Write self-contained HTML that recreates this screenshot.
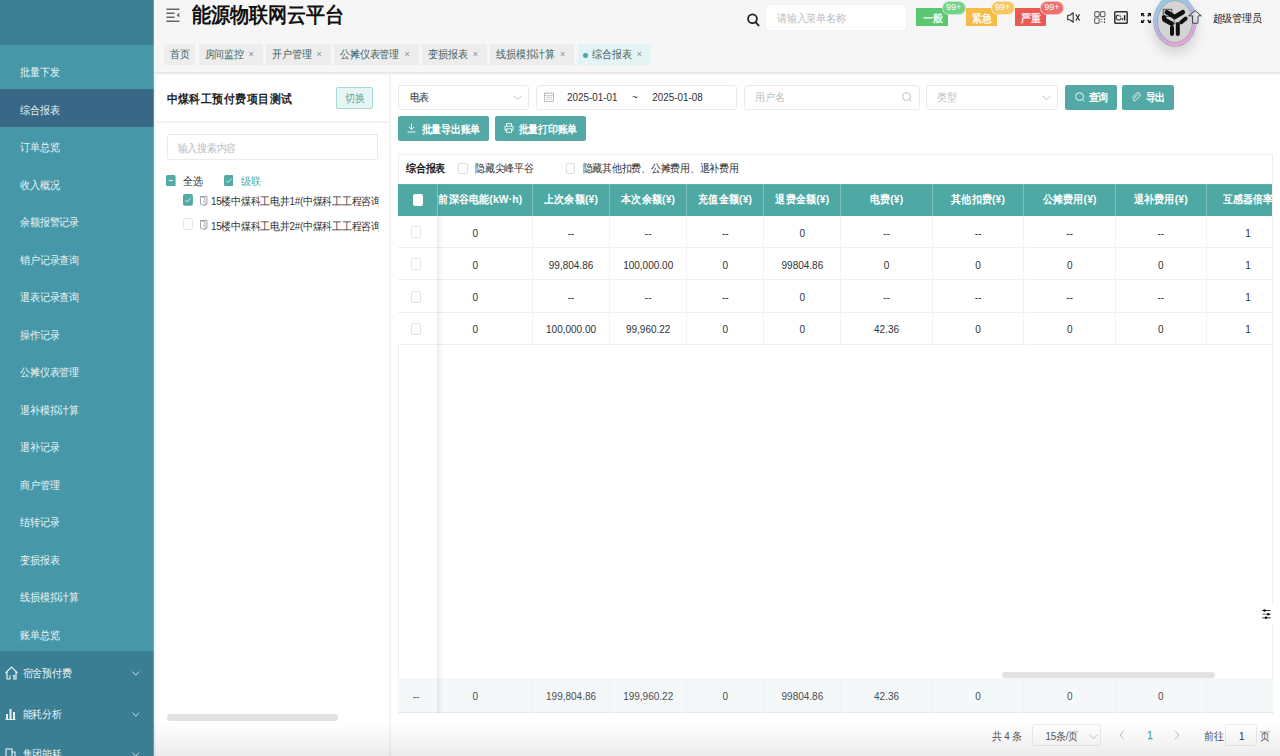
<!DOCTYPE html>
<html><head><meta charset="utf-8">
<style>
*{margin:0;padding:0;box-sizing:border-box}
html,body{width:1280px;height:756px;overflow:hidden;background:#f3f3f3;font-family:"Liberation Sans",sans-serif;color:#303133}
.a{position:absolute;white-space:nowrap}
#side{position:absolute;left:0;top:0;width:153.5px;height:756px;background:#4698a9;overflow:hidden}
.it{position:absolute;left:0;width:153.5px;height:37.5px;color:#eaf2f3;font-size:9.75px;letter-spacing:-0.25px}
.it>span{position:absolute;left:20.3px;line-height:37.5px;top:1.6px}
.act{background:#386886}
.tab{position:absolute;top:43.5px;height:21px;background:#ededed;color:#416363;font-size:9.75px;letter-spacing:-0.25px;line-height:21px;white-space:nowrap}
.tab>span{position:absolute;left:6px;top:-0.5px}
.tab>i{position:absolute;font-style:normal;color:#7f8e8e;font-size:9px;top:0}
.panel{position:absolute;background:#fff}
.inp{position:absolute;background:#fff;border:1px solid #ebebed;border-radius:2.5px}
.btn{position:absolute;background:#52a9a6;color:#fff;border-radius:2px;font-size:9.75px;letter-spacing:-0.25px}
.ph{color:#b9bcc2}
.hc{position:absolute;top:183.7px;height:32.2px;color:#fff;font-size:10.25px;letter-spacing:0.2px;font-weight:bold;text-align:center;line-height:32.2px;border-right:1px solid #7fc0bd;white-space:nowrap;overflow:hidden}
.c{position:absolute;height:32.25px;font-size:10px;text-align:center;line-height:34.25px;border-bottom:1px solid #eeeff1;border-right:1px solid #f2f2f4;color:#303133;white-space:nowrap}
.cb{position:absolute;width:9.5px;height:11.5px;border:1px solid #dcdfe6;border-radius:2px;background:#fff}
.t{display:inline-block;transform:scaleY(1.1);position:relative;top:0.8px}
</style></head><body>

<div id="side">
<div class="a" style="left:0;top:0;width:153.5px;height:45px;background:#3a7f94"></div>
<div class="it" style="top:51.90px"><span><span class="t">批量下发</span></span></div>
<div class="it act" style="top:89.40px"><span><span class="t">综合报表</span></span></div>
<div class="it" style="top:126.90px"><span><span class="t">订单总览</span></span></div>
<div class="it" style="top:164.40px"><span><span class="t">收入概况</span></span></div>
<div class="it" style="top:201.90px"><span><span class="t">余额报警记录</span></span></div>
<div class="it" style="top:239.40px"><span><span class="t">销户记录查询</span></span></div>
<div class="it" style="top:276.90px"><span><span class="t">退表记录查询</span></span></div>
<div class="it" style="top:314.40px"><span><span class="t">操作记录</span></span></div>
<div class="it" style="top:351.90px"><span><span class="t">公摊仪表管理</span></span></div>
<div class="it" style="top:389.40px"><span><span class="t">退补模拟计算</span></span></div>
<div class="it" style="top:426.90px"><span><span class="t">退补记录</span></span></div>
<div class="it" style="top:464.40px"><span><span class="t">商户管理</span></span></div>
<div class="it" style="top:501.90px"><span><span class="t">结转记录</span></span></div>
<div class="it" style="top:539.40px"><span><span class="t">变损报表</span></span></div>
<div class="it" style="top:576.90px"><span><span class="t">线损模拟计算</span></span></div>
<div class="it" style="top:614.40px"><span><span class="t">账单总览</span></span></div>
<div class="a" style="left:0;top:651px;width:153.5px;height:105px;background:#397e93"></div>
<div class="a" style="left:22.7px;top:663.3px;height:20px;line-height:20px;font-size:9.75px;letter-spacing:-0.25px;color:#eaf2f3"><span class="t">宿舍预付费</span></div>
<svg class="a" style="left:132px;top:670.9px" width="7.5" height="5" viewBox="0 0 7.5 5"><path d="M0.5 0.6 L3.75 4.2 L7 0.6" fill="none" stroke="#c6dde3" stroke-width="1"/></svg>
<div class="a" style="left:22.7px;top:704.0px;height:20px;line-height:20px;font-size:9.75px;letter-spacing:-0.25px;color:#eaf2f3"><span class="t">能耗分析</span></div>
<svg class="a" style="left:132px;top:711.6px" width="7.5" height="5" viewBox="0 0 7.5 5"><path d="M0.5 0.6 L3.75 4.2 L7 0.6" fill="none" stroke="#c6dde3" stroke-width="1"/></svg>
<div class="a" style="left:22.7px;top:744.5px;height:20px;line-height:20px;font-size:9.75px;letter-spacing:-0.25px;color:#eaf2f3"><span class="t">集团能耗</span></div>
<svg class="a" style="left:132px;top:752.1px" width="7.5" height="5" viewBox="0 0 7.5 5"><path d="M0.5 0.6 L3.75 4.2 L7 0.6" fill="none" stroke="#c6dde3" stroke-width="1"/></svg>
<svg class="a" style="left:4px;top:666px" width="15" height="14" viewBox="0 0 15 14"><path d="M1.5 7 L7.5 1 L13.5 7 M3 6 V13 H6 V9.5 M12 6 V13 H9" fill="none" stroke="#e8f0f2" stroke-width="1.2"/><path d="M9 9 L10 11 L11 9 M10 11 V13" fill="none" stroke="#e8f0f2" stroke-width="1"/></svg>
<svg class="a" style="left:5px;top:707px" width="11" height="13" viewBox="0 0 11 13"><path d="M0.5 12.5 H10.5" stroke="#e8f0f2" stroke-width="1"/><rect x="1" y="7" width="2" height="5" fill="#e8f0f2"/><rect x="4.5" y="2" width="2" height="10" fill="#e8f0f2"/><rect x="8" y="5" width="2" height="7" fill="#e8f0f2"/></svg>
<svg class="a" style="left:5px;top:748px" width="11" height="10" viewBox="0 0 11 10"><rect x="1" y="1" width="6" height="9" fill="none" stroke="#e8f0f2" stroke-width="1.1"/><path d="M7 4 H10 V10" fill="none" stroke="#e8f0f2" stroke-width="1.1"/></svg>
<div class="a" style="left:152.5px;top:0;width:1px;height:756px;background:rgba(255,255,255,0.22)"></div>
</div>
<div class="a" style="left:153.5px;top:0;width:1126.5px;height:73px;background:#f6f6f6;border-bottom:1px solid #e4e4e4"></div>
<svg class="a" style="left:166px;top:8px" width="14" height="14" viewBox="0 0 14 14"><path d="M0.4 1.2 H13.4 M0.4 5.3 H8.6 M0.4 9.2 H8.6 M0.4 13.3 H13.4" stroke="#666" stroke-width="1.6"/><path d="M13.3 4.6 L10.6 7.2 L13.3 9.6 Z" fill="#666"/></svg>
<div class="a" style="left:191.5px;top:3px;font-size:18.75px;font-weight:bold;color:#111;line-height:22px"><span class="t">能源物联网云平台</span></div>
<div class="tab" style="left:163.9px;width:30.9px;"><span><span class="t">首页</span></span></div>
<div class="tab" style="left:198.7px;width:64.1px;"><span><span class="t">房间监控</span></span><i style="left:49.9px"><span class="t">×</span></i></div>
<div class="tab" style="left:266.4px;width:64.3px;"><span><span class="t">开户管理</span></span><i style="left:50.1px"><span class="t">×</span></i></div>
<div class="tab" style="left:334.4px;width:84.3px;"><span><span class="t">公摊仪表管理</span></span><i style="left:70.1px"><span class="t">×</span></i></div>
<div class="tab" style="left:422.4px;width:64.6px;"><span><span class="t">变损报表</span></span><i style="left:50.4px"><span class="t">×</span></i></div>
<div class="tab" style="left:490.4px;width:83.8px;"><span><span class="t">线损模拟计算</span></span><i style="left:69.6px"><span class="t">×</span></i></div>
<div class="tab" style="left:577.8px;width:73.2px;background:#e4f3f3;"><b class="a" style="left:5.5px;top:9.5px;width:4.5px;height:4.5px;border-radius:50%;background:#4aa8a8"></b><span style="left:14.5px"><span class="t">综合报表</span></span><i style="left:59.0px"><span class="t">×</span></i></div>
<svg class="a" style="left:747px;top:13px" width="13" height="14" viewBox="0 0 13 14"><circle cx="5.5" cy="5.8" r="4.4" fill="none" stroke="#222" stroke-width="1.8"/><path d="M8.6 9.2 L11.6 12.4" stroke="#222" stroke-width="1.9" stroke-linecap="round"/></svg>
<div class="a" style="left:766px;top:5px;width:139.5px;height:25px;background:#fff;border-radius:2px;box-shadow:0 0 0 0.5px #ececec"></div>
<div class="a ph" style="left:777px;top:5px;line-height:25px;font-size:9.75px;letter-spacing:-0.25px"><span class="t">请输入菜单名称</span></div>
<div class="a" style="left:916.4px;top:8.2px;width:31.5px;height:18.2px;background:#5cc771;color:#fff;font-size:9.75px;letter-spacing:-0.25px;line-height:19.8px;text-align:center;padding-left:1.5px;-webkit-text-stroke:0.25px #fff"><span class="t">一般</span></div>
<div class="a" style="left:941.6px;top:1.2px;width:24.3px;height:13.8px;background:#6fcf83;opacity:0.95;border-radius:7px;border:1px solid rgba(255,255,255,0.55);color:#fff;font-size:9px;line-height:8.6px;text-align:center"><span class="t">99+</span></div>
<div class="a" style="left:965.7px;top:8.2px;width:31.1px;height:18.2px;background:#f5bd45;color:#fff;font-size:9.75px;letter-spacing:-0.25px;line-height:19.8px;text-align:center;padding-left:1.5px;-webkit-text-stroke:0.25px #fff"><span class="t">紧急</span></div>
<div class="a" style="left:990.5px;top:1.2px;width:24.3px;height:13.8px;background:#f6c65c;opacity:0.95;border-radius:7px;border:1px solid rgba(255,255,255,0.55);color:#fff;font-size:9px;line-height:8.6px;text-align:center"><span class="t">99+</span></div>
<div class="a" style="left:1014.9px;top:8.2px;width:31.1px;height:18.2px;background:#e95a55;color:#fff;font-size:9.75px;letter-spacing:-0.25px;line-height:19.8px;text-align:center;padding-left:1.5px;-webkit-text-stroke:0.25px #fff"><span class="t">严重</span></div>
<div class="a" style="left:1039.7px;top:1.2px;width:24.3px;height:13.8px;background:#ec6966;opacity:0.95;border-radius:7px;border:1px solid rgba(255,255,255,0.55);color:#fff;font-size:9px;line-height:8.6px;text-align:center"><span class="t">99+</span></div>
<svg class="a" style="left:1066.5px;top:12px" width="14" height="11" viewBox="0 0 14 11"><path d="M0.7 3.3 H3 L6.2 0.8 V10.2 L3 7.7 H0.7 Z" fill="none" stroke="#333" stroke-width="1.1" stroke-linejoin="round"/><path d="M8.8 2.4 L12.6 8.6 M12.6 2.4 L8.8 8.6" stroke="#333" stroke-width="1.1"/></svg>
<svg class="a" style="left:1094px;top:11px" width="12" height="13" viewBox="0 0 12 13"><rect x="0.6" y="0.6" width="4.6" height="5" rx="1.3" fill="none" stroke="#666" stroke-width="1.1"/><rect x="6.4" y="0.6" width="4.6" height="5" rx="1.3" fill="none" stroke="#666" stroke-width="1.1"/><rect x="0.6" y="7" width="4.6" height="5.4" rx="1.3" fill="none" stroke="#666" stroke-width="1.1"/><path d="M6.5 8.3 h2 M6.5 10.8 h2" stroke="#888" stroke-width="1"/><path d="M10.5 7.5 v1.6 M10.5 10.2 v1.6" stroke="#333" stroke-width="1.2"/></svg>
<svg class="a" style="left:1114px;top:11px" width="14" height="13" viewBox="0 0 14 13"><rect x="0.8" y="0.8" width="12.4" height="11.4" rx="0.8" fill="none" stroke="#333" stroke-width="1.5"/><path d="M7.2 6.6 A2.5 2.5 0 1 1 4.7 4.1" fill="none" stroke="#333" stroke-width="1.1"/><path d="M5.4 3.9 A2.3 2.3 0 0 1 7.3 5.8 H5.4 Z" fill="#555"/><path d="M8.6 7.2 V9.3" stroke="#333" stroke-width="1"/><path d="M10.6 4.2 V9.5" stroke="#222" stroke-width="1.5"/></svg>
<svg class="a" style="left:1141px;top:12.7px" width="10" height="10.4" viewBox="0 0 10 10.4"><path d="M0.6 0.6 L3.3 3.3 M9.4 0.6 L6.7 3.3 M0.6 9.8 L3.3 7.1 M9.4 9.8 L6.7 7.1" stroke="#111" stroke-width="1.4"/><path d="M0 0 H3.6 L0 3.6 Z M10 0 H6.4 L10 3.6 Z M0 10.4 H3.6 L0 6.8 Z M10 10.4 H6.4 L10 6.8 Z" fill="#111"/></svg>

<div class="a" style="left:1154.3px;top:-4px;width:42px;height:50px;border-radius:50%;background:linear-gradient(155deg,#86d2e0 0%,#9cc4e8 30%,#b9aeea 55%,#eba2d0 90%);box-shadow:0 0 0 0.6px #8a8a8a,0 7px 14px rgba(0,0,0,0.16)"></div>
<div class="a" style="left:1158.3px;top:1.3px;width:34px;height:40.4px;border-radius:50%;background:#d4d4d4;box-shadow:0 0 0 0.5px #9a9a9a"></div>
<svg class="a" style="left:1160px;top:6px" width="30" height="32" viewBox="0 0 30 32"><rect x="3.2" y="3.3" width="8.6" height="7" fill="none" stroke="#444" stroke-width="0.9"/><path d="M6.8 6.3 L12.3 9.5" stroke="#111" stroke-width="4.6" stroke-linecap="round"/><path d="M14.3 11.2 L22.8 6.2" stroke="#111" stroke-width="4.6" stroke-linecap="round"/><path d="M4 11.3 L4.5 13.8 L11.8 17.8" fill="none" stroke="#111" stroke-width="4.4" stroke-linecap="round" stroke-linejoin="round"/><path d="M21.2 16.2 L25.6 12.6" stroke="#111" stroke-width="4" stroke-linecap="round"/><path d="M12 21.5 V28" stroke="#111" stroke-width="4" stroke-linecap="round"/><path d="M17.8 18 V28" stroke="#111" stroke-width="4" stroke-linecap="round"/><path d="M13.8 12.5 L14.6 17.8 L17 16.4" fill="none" stroke="#666" stroke-width="0.9"/></svg>
<svg class="a" style="left:1188.3px;top:10px" width="14" height="14" viewBox="0 0 14 14"><path d="M7.2 0.7 L13.3 5.8 H10 V13.2 H4.6 V5.8 H0.6 Z" fill="rgba(246,246,246,0.55)" stroke="#333" stroke-width="0.9"/></svg>
<div class="a" style="left:1212.5px;top:8px;line-height:20px;font-size:9.75px;letter-spacing:-0.25px;color:#222"><span class="t">超级管理员</span></div>
<div class="panel" style="left:156px;top:74.8px;width:232.5px;height:46.2px"></div>
<div class="panel" style="left:156px;top:122.5px;width:232.5px;height:634px"></div>
<div class="a" style="left:166.5px;top:87px;line-height:22px;font-size:11px;letter-spacing:0.45px;font-weight:bold;color:#1f1f1f"><span class="t">中煤科工预付费项目测试</span></div>
<div class="a" style="left:336.4px;top:87.4px;width:36.6px;height:21.7px;background:#e8f5f5;border:1px solid #a9d7d6;border-radius:2px;color:#52a9a6;font-size:9.75px;letter-spacing:-0.25px;line-height:19.7px;text-align:center"><span class="t">切换</span></div>
<div class="inp" style="left:166.6px;top:134.3px;width:211.7px;height:25.9px"></div>
<div class="a ph" style="left:177.5px;top:135.3px;line-height:25.9px;font-size:9.75px;letter-spacing:-0.25px"><span class="t">输入搜索内容</span></div>
<svg class="a" style="left:166.3px;top:174.7px" width="9.6" height="11.2" viewBox="0 0 10 12" preserveAspectRatio="none"><rect x="0" y="0" width="10" height="12" rx="1.8" fill="#52a9a6"/><path d="M2.8 6 H7.2" stroke="#e6f4f3" stroke-width="1.1"/></svg>
<div class="a" style="left:183px;top:171px;line-height:20px;font-size:9.75px;letter-spacing:-0.25px;color:#303133"><span class="t">全选</span></div>
<svg class="a" style="left:223.5px;top:174.7px" width="9.6" height="11.2" viewBox="0 0 10 12" preserveAspectRatio="none"><rect x="0" y="0" width="10" height="12" rx="1.8" fill="#52a9a6"/><path d="M2.4 6.2 L4.3 8.2 L7.8 4" fill="none" stroke="#e6f4f3" stroke-width="0.9"/></svg>
<div class="a" style="left:241px;top:171px;line-height:20px;font-size:9.75px;letter-spacing:-0.25px;color:#52a9a6"><span class="t">级联</span></div>
<svg class="a" style="left:183px;top:194px" width="9.9" height="11.7" viewBox="0 0 10 12" preserveAspectRatio="none"><rect x="0" y="0" width="10" height="12" rx="1.8" fill="#52a9a6"/><path d="M2.4 6.2 L4.3 8.2 L7.8 4" fill="none" stroke="#e6f4f3" stroke-width="0.9"/></svg>
<div class="a" style="left:183px;top:218.3px;width:9.9px;height:11.8px;border:1px solid #e4e6ea;border-radius:2px;background:#fff"></div>
<svg class="a" style="left:199.6px;top:195.8px" width="8" height="10" viewBox="0 0 8 10"><path d="M0.5 0.5 H7 V8.3 H5" fill="none" stroke="#8e9298" stroke-width="0.8"/><path d="M0.5 0.5 L5 2 V9.6 L0.5 8.3 Z" fill="none" stroke="#8e9298" stroke-width="0.8"/><path d="M3.6 5 V6" stroke="#8e9298" stroke-width="0.8"/></svg>
<svg class="a" style="left:199.6px;top:219.8px" width="8" height="10" viewBox="0 0 8 10"><path d="M0.5 0.5 H7 V8.3 H5" fill="none" stroke="#8e9298" stroke-width="0.8"/><path d="M0.5 0.5 L5 2 V9.6 L0.5 8.3 Z" fill="none" stroke="#8e9298" stroke-width="0.8"/><path d="M3.6 5 V6" stroke="#8e9298" stroke-width="0.8"/></svg>
<div class="a" style="left:211px;top:191.5px;width:167.5px;overflow:hidden;line-height:20px;font-size:9.75px;letter-spacing:-0.25px;color:#303133"><span class="t">15楼中煤科工电井1#(中煤科工工程咨询有限公司)</span></div>
<div class="a" style="left:211px;top:216px;width:167.5px;overflow:hidden;line-height:20px;font-size:9.75px;letter-spacing:-0.25px;color:#303133"><span class="t">15楼中煤科工电井2#(中煤科工工程咨询有限公司)</span></div>
<div class="a" style="left:167px;top:714px;width:171px;height:6.5px;border-radius:3.5px;background:#e2e2e2"></div>
<div class="panel" style="left:391px;top:74.8px;width:889px;height:682px"></div>
<div class="inp" style="left:397.8px;top:84.7px;width:131.6px;height:25.8px"></div>
<div class="a" style="left:409.7px;top:84.7px;line-height:25.8px;font-size:9.75px;letter-spacing:-0.25px;color:#303133"><span class="t">电表</span></div>
<svg class="a" style="left:512.5px;top:94.5px" width="9" height="6" viewBox="0 0 9 6"><path d="M0.5 0.8 L4.5 4.8 L8.5 0.8" fill="none" stroke="#b4b8be" stroke-width="0.9"/></svg>
<div class="inp" style="left:536.2px;top:84.7px;width:201.3px;height:25.8px"></div>
<svg class="a" style="left:544px;top:91.5px" width="10" height="10" viewBox="0 0 10 10"><rect x="0.5" y="1.2" width="9" height="8.3" fill="none" stroke="#b4b8be" stroke-width="0.9"/><path d="M0.5 3.5 H9.5 M3 0 V2 M7 0 V2 M2 5.2 h6 M2 7.2 h6" stroke="#b4b8be" stroke-width="0.7"/></svg>
<div class="a" style="left:567px;top:84.7px;line-height:25.8px;font-size:9.85px;color:#303133"><span class="t">2025-01-01</span></div>
<div class="a" style="left:632px;top:84.7px;line-height:25.8px;font-size:9.75px;letter-spacing:-0.25px;color:#303133"><span class="t">~</span></div>
<div class="a" style="left:652.3px;top:84.7px;line-height:25.8px;font-size:9.85px;color:#303133"><span class="t">2025-01-08</span></div>
<div class="inp" style="left:744.2px;top:84.7px;width:175.5px;height:25.8px"></div>
<div class="a ph" style="left:755px;top:84.7px;line-height:25.8px;font-size:9.75px;letter-spacing:-0.25px"><span class="t">用户名</span></div>
<svg class="a" style="left:902px;top:92px" width="10" height="11" viewBox="0 0 10 11"><circle cx="4.6" cy="4.6" r="3.9" fill="none" stroke="#b4b8be" stroke-width="0.9"/><path d="M7.4 7.4 L9.4 9.6" stroke="#b4b8be" stroke-width="0.9"/></svg>
<div class="inp" style="left:926.4px;top:84.7px;width:131.8px;height:25.8px"></div>
<div class="a ph" style="left:937px;top:84.7px;line-height:25.8px;font-size:9.75px;letter-spacing:-0.25px"><span class="t">类型</span></div>
<svg class="a" style="left:1041.5px;top:94.5px" width="9" height="6" viewBox="0 0 9 6"><path d="M0.5 0.8 L4.5 4.8 L8.5 0.8" fill="none" stroke="#b4b8be" stroke-width="0.9"/></svg>
<div class="btn" style="left:1064.9px;top:85px;width:52.1px;height:24.6px"></div>
<svg class="a" style="left:1075px;top:92px" width="10" height="11" viewBox="0 0 10 11"><circle cx="4.6" cy="4.6" r="3.9" fill="none" stroke="#fff" stroke-width="0.9"/><path d="M7.4 7.4 L9.4 9.6" stroke="#fff" stroke-width="0.9"/></svg>
<div class="a" style="left:1088.5px;top:85.7px;line-height:24.6px;font-size:9.75px;letter-spacing:-0.25px;color:#fff;font-weight:bold"><span class="t">查询</span></div>
<div class="btn" style="left:1122.2px;top:85px;width:52px;height:24.6px"></div>
<svg class="a" style="left:1131px;top:91.5px" width="10" height="11" viewBox="0 0 10 11"><path d="M6.8 2.5 L2.5 6.8 a1.3 1.3 0 0 0 1.8 1.8 L8.6 4.3 a2.2 2.2 0 0 0 -3.1 -3.1 L1.3 5.5" fill="none" stroke="#fff" stroke-width="0.9"/></svg>
<div class="a" style="left:1145.5px;top:85.7px;line-height:24.6px;font-size:9.75px;letter-spacing:-0.25px;color:#fff;font-weight:bold"><span class="t">导出</span></div>
<div class="btn" style="left:397.8px;top:116.2px;width:91.4px;height:24.7px"></div>
<svg class="a" style="left:407px;top:123px" width="9" height="10" viewBox="0 0 9 10"><path d="M4.5 0.5 V6.5 M1.8 3.8 L4.5 6.5 L7.2 3.8 M0.5 9 H8.5" fill="none" stroke="#fff" stroke-width="0.9"/></svg>
<div class="a" style="left:421.5px;top:116.9px;line-height:24.7px;font-size:9.75px;letter-spacing:-0.25px;color:#fff;font-weight:bold"><span class="t">批量导出账单</span></div>
<div class="btn" style="left:495.1px;top:116.2px;width:90.6px;height:24.7px"></div>
<svg class="a" style="left:503.5px;top:123px" width="10" height="10" viewBox="0 0 10 10"><path d="M2.5 3 V0.6 H7.5 V3 M1 3.2 H9 V7.3 H7.5 M2.5 7.3 H1 V3.2 M2.5 5.8 H7.5 V9.4 H2.5 Z" fill="none" stroke="#fff" stroke-width="0.9"/></svg>
<div class="a" style="left:518.5px;top:116.9px;line-height:24.7px;font-size:9.75px;letter-spacing:-0.25px;color:#fff;font-weight:bold"><span class="t">批量打印账单</span></div>
<div class="a" style="left:397.8px;top:153.6px;width:875.2px;height:560px;border:1px solid #efefef;border-bottom:none;background:#fff"></div>
<div class="a" style="left:406px;top:158.5px;line-height:20px;font-size:9.75px;letter-spacing:-0.25px;font-weight:bold;color:#222"><span class="t">综合报表</span></div>
<div class="a" style="left:458px;top:163px;width:9.7px;height:11.4px;border:1px solid #dedee2;border-radius:2px;background:#fff"></div>
<div class="a" style="left:475px;top:158.5px;line-height:20px;font-size:9.75px;letter-spacing:-0.25px;color:#303133"><span class="t">隐藏尖峰平谷</span></div>
<div class="a" style="left:565.5px;top:163px;width:9.7px;height:11.4px;border:1px solid #dedee2;border-radius:2px;background:#fff"></div>
<div class="a" style="left:582.5px;top:158.5px;line-height:20px;font-size:9.75px;letter-spacing:-0.25px;color:#303133"><span class="t">隐藏其他扣费、公摊费用、退补费用</span></div>
<div class="a" style="left:398.2px;top:183.7px;width:874.3px;height:32.2px;background:#4ea9a5;border-top:1px solid #5cb1ad"></div>
<div class="a" style="left:437px;top:183.7px;width:835.5px;height:530px;overflow:hidden">
<div class="hc" style="left:-18.3px;width:114.1px;top:0"><span class="t">当前深谷电能(kW·h)</span></div>
<div class="hc" style="left:95.8px;width:77.5px;top:0"><span class="t">上次余额(¥)</span></div>
<div class="hc" style="left:173.3px;width:76.8px;top:0"><span class="t">本次余额(¥)</span></div>
<div class="hc" style="left:250.1px;width:77.3px;top:0"><span class="t">充值金额(¥)</span></div>
<div class="hc" style="left:327.4px;width:77.0px;top:0"><span class="t">退费金额(¥)</span></div>
<div class="hc" style="left:404.4px;width:91.4px;top:0"><span class="t">电费(¥)</span></div>
<div class="hc" style="left:495.8px;width:91.7px;top:0"><span class="t">其他扣费(¥)</span></div>
<div class="hc" style="left:587.5px;width:91.4px;top:0"><span class="t">公摊费用(¥)</span></div>
<div class="hc" style="left:678.9px;width:90.9px;top:0"><span class="t">退补费用(¥)</span></div>
<div class="hc" style="left:769.8px;width:83.7px;top:0"><span class="t">互感器倍率</span></div>
<div class="c" style="left:-18.3px;width:114.1px;top:32.20px"><span class="t">0</span></div>
<div class="c" style="left:95.8px;width:77.5px;top:32.20px"><span class="t">--</span></div>
<div class="c" style="left:173.3px;width:76.8px;top:32.20px"><span class="t">--</span></div>
<div class="c" style="left:250.1px;width:77.3px;top:32.20px"><span class="t">--</span></div>
<div class="c" style="left:327.4px;width:77.0px;top:32.20px"><span class="t">0</span></div>
<div class="c" style="left:404.4px;width:91.4px;top:32.20px"><span class="t">--</span></div>
<div class="c" style="left:495.8px;width:91.7px;top:32.20px"><span class="t">--</span></div>
<div class="c" style="left:587.5px;width:91.4px;top:32.20px"><span class="t">--</span></div>
<div class="c" style="left:678.9px;width:90.9px;top:32.20px"><span class="t">--</span></div>
<div class="c" style="left:769.8px;width:83.7px;top:32.20px"><span class="t">1</span></div>
<div class="c" style="left:-18.3px;width:114.1px;top:64.45px"><span class="t">0</span></div>
<div class="c" style="left:95.8px;width:77.5px;top:64.45px"><span class="t">99,804.86</span></div>
<div class="c" style="left:173.3px;width:76.8px;top:64.45px"><span class="t">100,000.00</span></div>
<div class="c" style="left:250.1px;width:77.3px;top:64.45px"><span class="t">0</span></div>
<div class="c" style="left:327.4px;width:77.0px;top:64.45px"><span class="t">99804.86</span></div>
<div class="c" style="left:404.4px;width:91.4px;top:64.45px"><span class="t">0</span></div>
<div class="c" style="left:495.8px;width:91.7px;top:64.45px"><span class="t">0</span></div>
<div class="c" style="left:587.5px;width:91.4px;top:64.45px"><span class="t">0</span></div>
<div class="c" style="left:678.9px;width:90.9px;top:64.45px"><span class="t">0</span></div>
<div class="c" style="left:769.8px;width:83.7px;top:64.45px"><span class="t">1</span></div>
<div class="c" style="left:-18.3px;width:114.1px;top:96.70px"><span class="t">0</span></div>
<div class="c" style="left:95.8px;width:77.5px;top:96.70px"><span class="t">--</span></div>
<div class="c" style="left:173.3px;width:76.8px;top:96.70px"><span class="t">--</span></div>
<div class="c" style="left:250.1px;width:77.3px;top:96.70px"><span class="t">--</span></div>
<div class="c" style="left:327.4px;width:77.0px;top:96.70px"><span class="t">0</span></div>
<div class="c" style="left:404.4px;width:91.4px;top:96.70px"><span class="t">--</span></div>
<div class="c" style="left:495.8px;width:91.7px;top:96.70px"><span class="t">--</span></div>
<div class="c" style="left:587.5px;width:91.4px;top:96.70px"><span class="t">--</span></div>
<div class="c" style="left:678.9px;width:90.9px;top:96.70px"><span class="t">--</span></div>
<div class="c" style="left:769.8px;width:83.7px;top:96.70px"><span class="t">1</span></div>
<div class="c" style="left:-18.3px;width:114.1px;top:128.95px"><span class="t">0</span></div>
<div class="c" style="left:95.8px;width:77.5px;top:128.95px"><span class="t">100,000.00</span></div>
<div class="c" style="left:173.3px;width:76.8px;top:128.95px"><span class="t">99,960.22</span></div>
<div class="c" style="left:250.1px;width:77.3px;top:128.95px"><span class="t">0</span></div>
<div class="c" style="left:327.4px;width:77.0px;top:128.95px"><span class="t">0</span></div>
<div class="c" style="left:404.4px;width:91.4px;top:128.95px"><span class="t">42.36</span></div>
<div class="c" style="left:495.8px;width:91.7px;top:128.95px"><span class="t">0</span></div>
<div class="c" style="left:587.5px;width:91.4px;top:128.95px"><span class="t">0</span></div>
<div class="c" style="left:678.9px;width:90.9px;top:128.95px"><span class="t">0</span></div>
<div class="c" style="left:769.8px;width:83.7px;top:128.95px"><span class="t">1</span></div>
<div class="a" style="left:0;top:494.5px;width:835.5px;height:35.2px;background:#f5f8f9;border-bottom:1px solid #e6e9ee"></div>
<div class="c" style="left:-18.3px;width:114.1px;top:494.5px;height:35.2px;line-height:36.6px;border-bottom:none;color:#4a4d52"><span class="t">0</span></div>
<div class="c" style="left:95.8px;width:77.5px;top:494.5px;height:35.2px;line-height:36.6px;border-bottom:none;color:#4a4d52"><span class="t">199,804.86</span></div>
<div class="c" style="left:173.3px;width:76.8px;top:494.5px;height:35.2px;line-height:36.6px;border-bottom:none;color:#4a4d52"><span class="t">199,960.22</span></div>
<div class="c" style="left:250.1px;width:77.3px;top:494.5px;height:35.2px;line-height:36.6px;border-bottom:none;color:#4a4d52"><span class="t">0</span></div>
<div class="c" style="left:327.4px;width:77.0px;top:494.5px;height:35.2px;line-height:36.6px;border-bottom:none;color:#4a4d52"><span class="t">99804.86</span></div>
<div class="c" style="left:404.4px;width:91.4px;top:494.5px;height:35.2px;line-height:36.6px;border-bottom:none;color:#4a4d52"><span class="t">42.36</span></div>
<div class="c" style="left:495.8px;width:91.7px;top:494.5px;height:35.2px;line-height:36.6px;border-bottom:none;color:#4a4d52"><span class="t">0</span></div>
<div class="c" style="left:587.5px;width:91.4px;top:494.5px;height:35.2px;line-height:36.6px;border-bottom:none;color:#4a4d52"><span class="t">0</span></div>
<div class="c" style="left:678.9px;width:90.9px;top:494.5px;height:35.2px;line-height:36.6px;border-bottom:none;color:#4a4d52"><span class="t">0</span></div>
<div class="c" style="left:769.8px;width:83.7px;top:494.5px;height:35.2px;line-height:36.6px;border-bottom:none;color:#4a4d52"></div>
<div class="a" style="left:564.8px;top:488.3px;width:213px;height:6.5px;border-radius:3.5px;background:#e2e2e2"></div>
</div>
<div class="a" style="left:398.2px;top:215.9px;width:38.8px;height:129.1px;background:#fff"></div>
<div class="a" style="left:398.2px;top:215.90px;width:38.8px;height:32.25px;border-bottom:1px solid #eeeff1"></div>
<div class="a" style="left:411.3px;top:226.20000000000002px;width:9.4px;height:12px;border:1px solid #e3e3e5;border-radius:2px;background:#fff"></div>
<div class="a" style="left:398.2px;top:248.15px;width:38.8px;height:32.25px;border-bottom:1px solid #eeeff1"></div>
<div class="a" style="left:411.3px;top:258.45px;width:9.4px;height:12px;border:1px solid #e3e3e5;border-radius:2px;background:#fff"></div>
<div class="a" style="left:398.2px;top:280.40px;width:38.8px;height:32.25px;border-bottom:1px solid #eeeff1"></div>
<div class="a" style="left:411.3px;top:290.7px;width:9.4px;height:12px;border:1px solid #e3e3e5;border-radius:2px;background:#fff"></div>
<div class="a" style="left:398.2px;top:312.65px;width:38.8px;height:32.25px;border-bottom:1px solid #eeeff1"></div>
<div class="a" style="left:411.3px;top:322.95px;width:9.4px;height:12px;border:1px solid #e3e3e5;border-radius:2px;background:#fff"></div>
<div class="a" style="left:398.2px;top:678.2px;width:38.8px;height:35.2px;background:#f5f8f9;border-bottom:1px solid #e6e9ee;text-align:center;line-height:36.6px;font-size:10px;color:#4a4d52;padding-right:3px"><span class="t">--</span></div>
<div class="a" style="left:412.9px;top:194.1px;width:9.7px;height:11.5px;background:#fff;border-radius:2px"></div>
<div class="a" style="left:437px;top:215.9px;width:6px;height:497.5px;background:linear-gradient(90deg,rgba(0,0,0,0.075),rgba(0,0,0,0))"></div>
<div class="a" style="left:436.5px;top:183.7px;width:1px;height:32.2px;background:#86c4c1"></div>
<div class="a" style="left:437.5px;top:183.7px;width:4px;height:32.2px;background:linear-gradient(90deg,rgba(0,0,0,0.05),rgba(0,0,0,0))"></div>
<div class="a" style="left:1258px;top:603.5px;width:20px;height:21.5px;background:#fff"></div>
<svg class="a" style="left:1262px;top:609px" width="9" height="10" viewBox="0 0 9 10"><path d="M0.3 1.5 H8.7 M0.3 8.8 H8.7" stroke="#222" stroke-width="0.9"/><path d="M0.3 5.2 H8.7" stroke="#555" stroke-width="0.9"/><ellipse cx="2.5" cy="1.5" rx="1.3" ry="1.2" fill="#111"/><ellipse cx="6.3" cy="5.2" rx="1.3" ry="1.2" fill="#111"/><ellipse cx="4" cy="8.8" rx="1.3" ry="1.2" fill="#111"/></svg>
<div class="a" style="left:992px;top:726px;line-height:20px;font-size:9.75px;letter-spacing:-0.25px;color:#505458"><span class="t">共 4 条</span></div>
<div class="inp" style="left:1031.6px;top:723.7px;width:69.8px;height:22.3px"></div>
<div class="a" style="left:1045.6px;top:725.3px;line-height:21px;font-size:9.75px;letter-spacing:-0.25px;color:#505458"><span class="t">15条/页</span></div>
<svg class="a" style="left:1089px;top:733.5px" width="9" height="6" viewBox="0 0 9 6"><path d="M0.5 0.8 L4.5 4.8 L8.5 0.8" fill="none" stroke="#b4b8be" stroke-width="0.9"/></svg>
<svg class="a" style="left:1119.3px;top:730px" width="6" height="10" viewBox="0 0 6 10"><path d="M5 0.8 L1 5 L5 9.2" fill="none" stroke="#b4b8be" stroke-width="0.9"/></svg>
<div class="a" style="left:1147.3px;top:725.5px;line-height:20px;font-size:10px;color:#52a9a6;-webkit-text-stroke:0.3px #52a9a6"><span class="t">1</span></div>
<svg class="a" style="left:1174px;top:730px" width="6" height="10" viewBox="0 0 6 10"><path d="M1 0.8 L5 5 L1 9.2" fill="none" stroke="#b4b8be" stroke-width="0.9"/></svg>
<div class="a" style="left:1203.8px;top:726px;line-height:20px;font-size:9.75px;letter-spacing:-0.25px;color:#505458"><span class="t">前往</span></div>
<div class="inp" style="left:1225.4px;top:723.7px;width:32px;height:22.3px"></div>
<div class="a" style="left:1239px;top:726px;line-height:20px;font-size:10px;color:#303133"><span class="t">1</span></div>
<div class="a" style="left:1260px;top:726px;line-height:20px;font-size:9.75px;letter-spacing:-0.25px;color:#505458"><span class="t">页</span></div>
<div class="a" style="left:153.5px;top:722px;width:1126.5px;height:34px;background:linear-gradient(180deg,rgba(0,0,0,0),rgba(0,0,0,0.075))"></div>
</body></html>
